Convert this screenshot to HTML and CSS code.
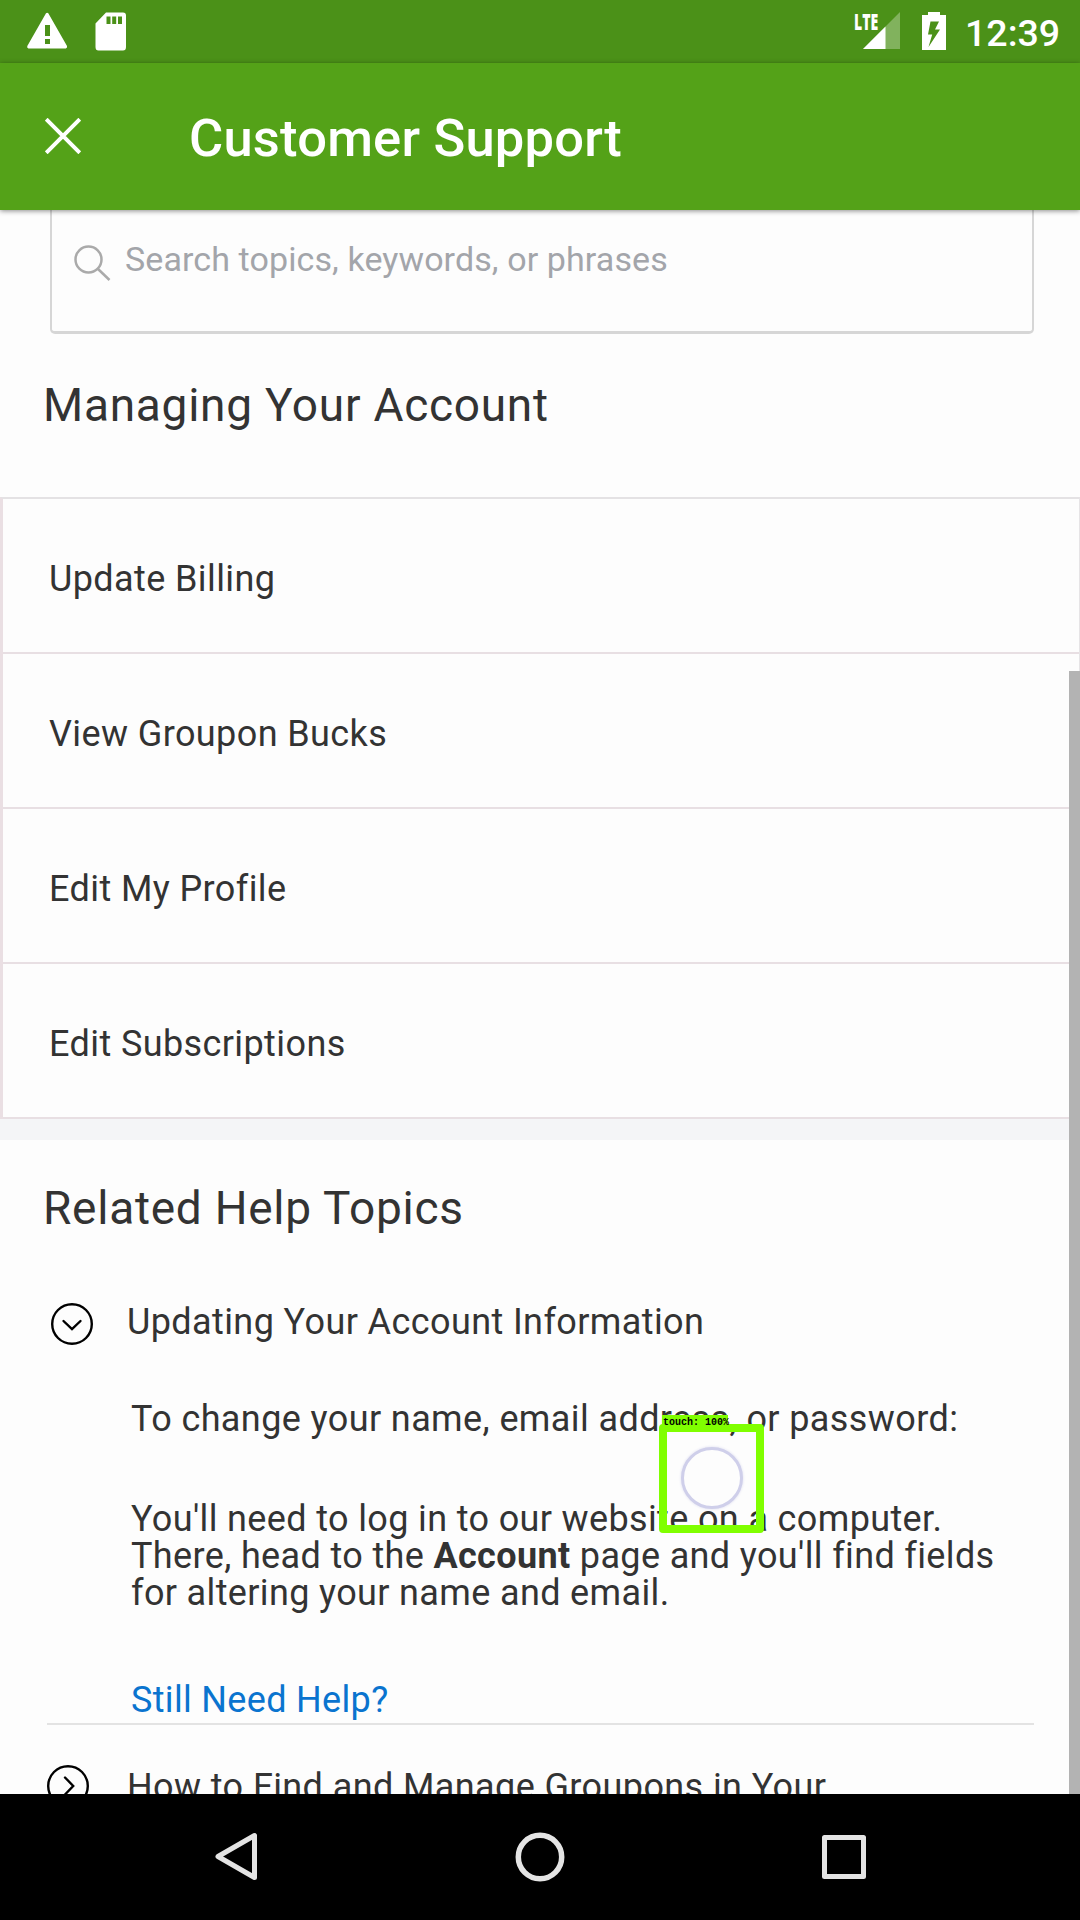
FILE: index.html
```html
<!DOCTYPE html>
<html lang="en">
<head>
<meta charset="utf-8">
<title>Customer Support</title>
<link rel="stylesheet" href="styles.css">
</head>
<body>
<div class="screen">
  <div class="status">
    <svg class="status-left" width="140" height="63" viewBox="0 0 140 63" fill="#fff">
      <path fill-rule="evenodd" d="M46 13.2q1.2-1 2.300 0L67 46q.6 2-1.200 2.400H28.400Q26.600 48 27.300 46zM45 25v11h5V25zM45 39v5h5v-5z"/>
      <path fill-rule="evenodd" d="M106 12.500h17q3 0 3 3V47q0 3.500-3 3.500H98.500q-3 0-3-3.500V23.500zM106.500 16.500V24h4v-7.500zm5.700 0V24h4v-7.500zm5.800 0V24h4v-7.500z"/>
    </svg>
    <div class="signal">
      <span class="lte">LTE</span>
      <svg width="38" height="38" viewBox="0 0 38 38">
        <path d="M37 0V37H0z" fill="#fff" opacity=".3"/>
        <path d="M22.500 14.500V37H0z" fill="#fff"/>
      </svg>
    </div>
    <svg class="battery" width="24" height="38" viewBox="0 0 24 38">
      <path fill="#fff" fill-rule="evenodd" d="M6 0h12v3h6v35H0V3h6zM8.500 9.500L6 22.500h4.200L6.500 35 18 17.500h-5l4-8z"/>
    </svg>
    <span class="clock">12:39</span>
  </div>
  <header class="appbar">
    <svg class="close" width="36" height="36" viewBox="0 0 36 36"><path d="M1.200 1.200L34.800 34.800M34.800 1.200L1.200 34.800" stroke="#fff" stroke-width="4" fill="none"/></svg>
    <h1 class="title">Customer Support</h1>
  </header>
  <main class="content">
    <div class="search">
      <svg width="37" height="37" viewBox="0 0 37 37" fill="none" stroke="#aaa" stroke-width="2.500"><circle cx="14.500" cy="14.500" r="13"/><path d="M23.500 23.500L35.500 35"/></svg>
      <span class="placeholder">Search topics, keywords, or phrases</span>
    </div>
    <h2 class="heading">Managing Your Account</h2>
    <ul class="list">
      <li>Update Billing</li>
      <li>View Groupon Bucks</li>
      <li>Edit My Profile</li>
      <li>Edit Subscriptions</li>
    </ul>
    <div class="band"></div>
    <h2 class="heading related">Related Help Topics</h2>
    <section class="topic">
      <div class="topic-head">
        <svg width="42" height="42" viewBox="0 0 42 42" fill="none" stroke="#000" stroke-width="2.400"><circle cx="21" cy="21" r="19.800"/><path d="M12.500 18L21 26.200 29.500 18" stroke-linecap="round"/></svg>
        <span>Updating Your Account Information</span>
      </div>
      <div class="topic-body">
        <p>To change your name, email address, or password:</p>
        <p class="steps">You'll need to log in to our website on a computer.<br>There, head to the <b>Account</b> page and you'll find fields<br>for altering your name and email.</p>
        <a class="help">Still Need Help?</a>
      </div>
    </section>
    <section class="topic-head next">
      <svg width="42" height="42" viewBox="0 0 42 42" fill="none" stroke="#000" stroke-width="2.400"><circle cx="21" cy="21" r="19.800"/><path d="M18 12.500L26.200 21 18 29.500" stroke-linecap="round"/></svg>
      <span>How to Find and Manage Groupons in Your</span>
    </section>
    <div class="scrollbar"></div>
    <div class="touch">
      <span class="touch-label">touch: 100%</span>
      <div class="touch-box"><div class="ring"></div></div>
    </div>
  </main>
  <nav class="navbar">
    <svg width="44" height="52" viewBox="0 0 44 52" fill="none" stroke="#e4e4e4" stroke-width="5" stroke-linejoin="round"><path d="M39.500 4.500V46.500L3 25.500z"/></svg>
    <svg class="home" width="50" height="50" viewBox="0 0 50 50" fill="none" stroke="#e4e4e4" stroke-width="5.500"><circle cx="25" cy="25" r="21.700"/></svg>
    <svg width="44" height="44" viewBox="0 0 44 44" fill="none" stroke="#e4e4e4" stroke-width="5" stroke-linejoin="round"><path d="M2.500 2.500h39v39h-39z"/></svg>
  </nav>
</div>
</body>
</html>
```
FILE: styles.css
```css
* { box-sizing: border-box; margin: 0; padding: 0; }
body { font-family: Roboto, sans-serif; color: #333; background: #fdfdfd; }
.screen { width: 1080px; height: 1920px; display: flex; flex-direction: column; overflow: hidden; }
.status { height: 63px; flex: none; background: #4b9118; display: flex; color: #fff; }
.status-left { margin-right: auto; }
.signal { display: flex; margin: 12px 21px 0 0; }
.lte { font: 800 22px/18px "Open Sans", sans-serif; width: 9px; white-space: nowrap; transform: scaleX(.64); transform-origin: 0 0; }
.battery { margin: 12px 19px 0 0; }
.clock { width: 115px; font-size: 37.500px; font-weight: 500; line-height: 66px; white-space: nowrap; }
.appbar { height: 147px; flex: none; background: #54a218; display: flex; position: relative; z-index: 2; box-shadow: 0 1px 5px rgba(0,0,0,.45); }
.close { margin: 55px 108px 0 45px; }
.title { color: #fff; font-size: 52.500px; font-weight: 500; line-height: 151px; letter-spacing: .2px; }
.content { flex: 1; min-height: 0; overflow: hidden; position: relative; letter-spacing: .4px; }
.search { display: flex; width: 984px; height: 124px; margin-left: 50px; border: solid #d6d6d6; border-width: 0 2.500px 3px; border-radius: 0 0 5px 5px; padding: 35px 0 0 22px; }
.placeholder { font-size: 34px; line-height: 40px; margin: -6px 0 0 14px; color: #a3a5aa; white-space: nowrap; letter-spacing: .1px; }
.heading { font-size: 46px; font-weight: 400; line-height: 60px; padding-left: 43px; margin: 41px 0 62px; letter-spacing: .74px; }
.list { list-style: none; border-top: 2px solid #e4e2e4; border-left: 3px solid #eadfe3; border-right: 1px solid #e6e4e6; }
.list li { height: 155px; border-bottom: 2px solid #e8dfe3; padding-left: 46px; font-size: 36px; line-height: 160px; }
.band { height: 21px; background: #f4f5f7; }
.related { margin: 38px 0 65px; }
.topic { margin: 0 46px 0 47px; height: 422px; border-bottom: 2px solid #e3e3e3; }
.topic-head { display: flex; align-items: flex-start; font-size: 36px; line-height: 42px; gap: 34px; padding-left: 4px; white-space: nowrap; }
.topic-head span { margin-top: -2px; }
.topic-body { padding: 56px 0 0 84px; font-size: 36px; line-height: 37px; white-space: nowrap; }
.steps { margin: 63px 0 70px; letter-spacing: .36px; }
.help { color: #0a74cf; letter-spacing: .33px; }
.next { margin: 40px 0 0 46.500px; padding-left: 0; gap: 38.500px; }
.next span { margin-top: 1px; }
.scrollbar { position: absolute; right: 0; top: 461px; width: 11px; bottom: 0; background: #b3b3b3; }
.touch { position: absolute; left: 659px; top: 1205px; }
.touch-label { display: block; width: 66px; height: 14px; margin-left: 3px; padding-left: 1px; background: #80ff00; color: #000; font: bold 10px/15px "Liberation Mono", monospace; letter-spacing: 0; white-space: nowrap; }
.touch-box { width: 105px; height: 109px; margin-top: -5px; border: 8px solid #80ff00; border-radius: 4px; padding: 15px 0 0 14px; }
.ring { width: 62px; height: 62px; border-radius: 50%; border: 3px solid #cfcfea; background: #fdfdfd; box-shadow: 0 0 3px #dcdcf0; }
.touch-label { position: relative; z-index: 1; }
.navbar { height: 126px; flex: none; background: #000; display: flex; align-items: center; justify-content: space-between; padding: 0 214px 0 215px; }
.home { margin-right: 2px; }
```
